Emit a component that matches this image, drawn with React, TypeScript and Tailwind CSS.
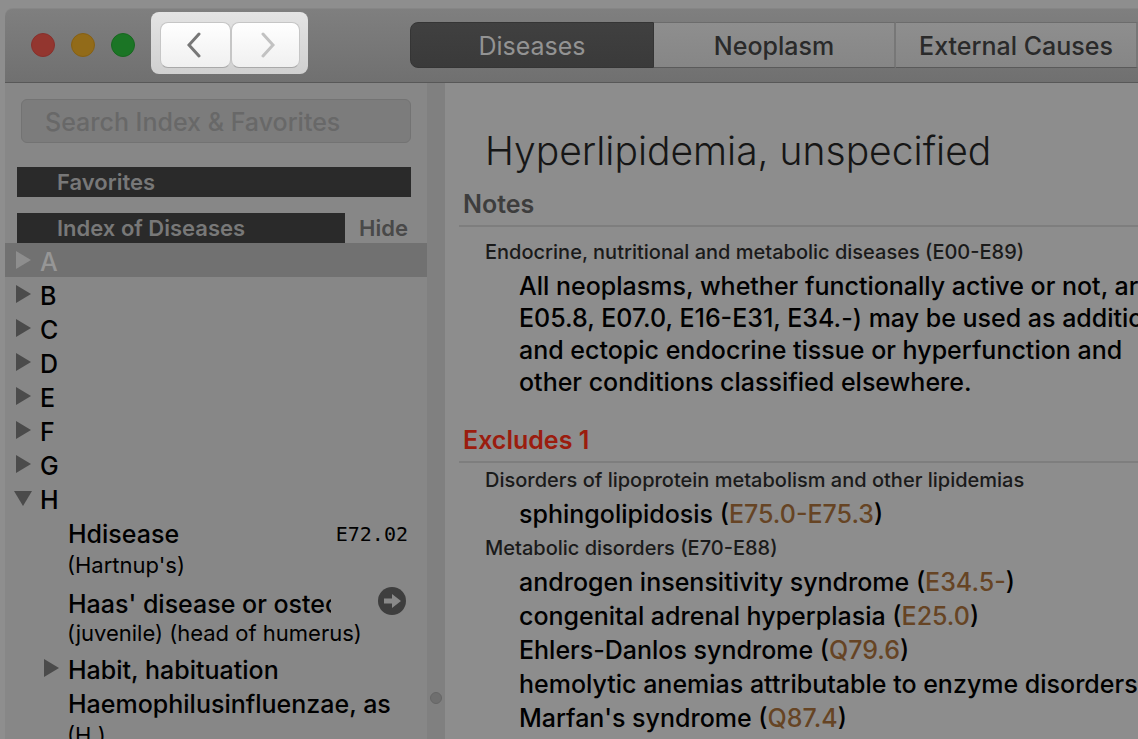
import { ReactNode } from 'react';

type Entry = {
  term: string;
  note?: string;
  code?: string;
  link?: boolean;
  expandable?: boolean;
};

const tabs = ['Diseases', 'Neoplasm', 'External Causes'];

const letters = ['A', 'B', 'C', 'D', 'E', 'F', 'G', 'H'];

const entries: Entry[] = [
  { term: 'Hdisease', note: "(Hartnup's)", code: 'E72.02' },
  { term: "Haas' disease or osteochondrosis", note: '(juvenile) (head of humerus)', link: true },
  { term: 'Habit, habituation', expandable: true },
  { term: 'Haemophilusinfluenzae, as', note: '(H.)' },
];

const metabolic = [
  { name: 'androgen insensitivity syndrome', code: 'E34.5-' },
  { name: 'congenital adrenal hyperplasia', code: 'E25.0' },
  { name: 'Ehlers-Danlos syndrome', code: 'Q79.6' },
  { name: 'hemolytic anemias attributable to enzyme disorders', code: 'D55.-' },
  { name: "Marfan's syndrome", code: 'Q87.4' },
];

const Triangle = ({ open = false }: { open?: boolean }) => (
  <svg width="18" height="18" viewBox="0 0 18 18" fill="currentColor" aria-hidden="true">
    {open ? <path d="M0 2H18L9 17Z" /> : <path d="M2 0V18L17 9Z" />}
  </svg>
);

const Toolbar = () => (
  <header className="flex h-[75px] shrink-0 items-start rounded-tl-lg border-t border-b border-t-[#868686] border-b-[#585858] bg-linear-to-b from-[#7f7f7f] to-[#707070]">
    <div className="flex shrink-0 gap-4 pt-6 pl-[26px]">
      <button aria-label="Close" className="size-6 rounded-full border border-[#87302c] bg-[#93362f]" />
      <button aria-label="Minimize" className="size-6 rounded-full border border-[#866014] bg-[#926b19]" />
      <button aria-label="Zoom" className="size-6 rounded-full border border-[#17671f] bg-[#1b7525]" />
    </div>

    {/* Back / forward */}
    <div className="mt-[3px] ml-4 flex h-[62px] w-[157px] shrink-0 rounded-lg bg-linear-to-b from-[#e4e4e4] to-[#d0d0d0] pt-[10px] pl-[9px]">
      <button aria-label="Back" className="flex h-[46px] w-[71px] items-center justify-center rounded-lg border border-[#c6c6c6] border-b-[#a9a9a9] bg-linear-to-b from-white to-[#f0f0f0] pr-1 text-[#777]">
        <svg width="14" height="26" viewBox="0 0 14 26" fill="none" stroke="currentColor" strokeWidth="3" strokeLinecap="round">
          <path d="M12 2L2 13L12 24" />
        </svg>
      </button>
      <button aria-label="Forward" className="flex h-[46px] w-[69px] items-center justify-center rounded-lg border border-[#c6c6c6] border-b-[#a9a9a9] bg-linear-to-b from-white to-[#f0f0f0] pl-1 text-[#c2c2c2]">
        <svg width="14" height="26" viewBox="0 0 14 26" fill="none" stroke="currentColor" strokeWidth="3" strokeLinecap="round">
          <path d="M2 2L12 13L2 24" />
        </svg>
      </button>
    </div>

    <nav className="mt-[13px] ml-[102px] flex h-[46px] shrink-0 text-[25px]">
      {tabs.map((tab, i) => (
        <button
          key={tab}
          className={
            i === 0
              ? 'w-[244px] rounded-l-lg border border-[#353535] bg-linear-to-b from-[#404040] to-[#3a3a3a] pt-1 text-[#939393]'
              : 'w-[242px] border-t border-r-2 border-b border-t-[#6c6c6c] border-r-[#777] border-b-[#5a5a5a] bg-linear-to-b from-[#8e8e8e] to-[#868686] pt-1 font-medium text-[#2a2a2a]'
          }
        >
          {tab}
        </button>
      ))}
    </nav>
  </header>
);

const Sidebar = () => (
  <aside className="w-[422px] shrink-0 overflow-hidden bg-[#878787]">
    <div className="px-4 pt-4">
      <input
        type="search"
        aria-label="Search Index & Favorites"
        placeholder="Search Index & Favorites"
        className="block h-11 w-[390px] rounded-md border border-[#737373] bg-[#7c7c7c] px-[23px] pt-[2px] text-[25px] font-medium placeholder:text-[#686868]"
      />
    </div>

    <h2 className="mx-3 mt-6 w-[394px] bg-[#2a2a2a] pl-10 text-[22px] leading-[30px] font-semibold text-[#787878]">
      Favorites
    </h2>
    <div className="mt-4 mr-4 ml-3 flex text-[22px] leading-[30px] font-semibold">
      <h2 className="w-[328px] bg-[#2a2a2a] pl-10 text-[#787878]">Index of Diseases</h2>
      <button className="pl-[14px] text-[#494949]">Hide</button>
    </div>

    <ul className="text-[25px] leading-[34px] font-medium text-black">
      {letters.map((letter) => (
        <li key={letter}>
          <button
            className={`flex h-[34px] w-full items-center pl-[9px] ${
              letter === 'A' ? 'bg-[#717171] text-[#969696]' : ''
            }`}
          >
            <span className={letter === 'A' ? 'text-[#8e8e8e]' : 'text-[#4b4b4b]'}>
              <Triangle open={letter === 'H'} />
            </span>
            <span className="pt-1 pl-2">{letter}</span>
          </button>
        </li>
      ))}

      {entries.map((entry) => (
        <li key={entry.term} className={entry.note ? 'h-[68px]' : 'h-[34px]'}>
          <div className="flex h-[34px] items-center pr-[19px] pl-[37px] whitespace-nowrap">
            <span className="w-[26px] shrink-0 text-[#4b4b4b]">{entry.expandable && <Triangle />}</span>
            <span className={entry.link ? 'w-[263px] overflow-hidden pt-2' : 'pt-1'}>{entry.term}</span>
            {entry.code && (
              <span className="ml-auto pt-1 font-['DejaVu_Sans_Mono',monospace] text-[20px] font-normal">
                {entry.code}
              </span>
            )}
            {entry.link && (
              <button aria-label="Go to entry" className="mr-[2px] ml-auto pt-[2px]">
                <svg width="28" height="28" viewBox="0 0 28 28">
                  <circle cx="14" cy="14" r="14" fill="#3e3e3e" />
                  <path d="M6 11.5H14V7L23 14L14 21V16.5H6Z" fill="#898989" />
                </svg>
              </button>
            )}
          </div>
          {entry.note && <div className="pt-[2px] pl-[62px] text-[22px] leading-7 font-normal">{entry.note}</div>}
        </li>
      ))}
    </ul>
  </aside>
);

const Section = ({ title, red = false, children }: { title: string; red?: boolean; children: ReactNode }) => (
  <section className="whitespace-nowrap">
    <h2
      className={`border-b-2 border-[#7e7e7e] pl-1 text-[25px] leading-[42px] font-semibold ${
        red ? 'text-[#9b1c0e]' : 'text-[#3d3d3d]'
      }`}
    >
      {title}
    </h2>
    {children}
  </section>
);

const Category = ({ children }: { children: ReactNode }) => (
  <h3 className="pl-[26px] text-[20px] leading-[34px] font-medium text-[#1a1a1a]">{children}</h3>
);

const Code = ({ name, code }: { name: string; code: string }) => (
  <li>
    {name} (
    <a href="#" className="text-[#664424]">
      {code}
    </a>
    )
  </li>
);

const Detail = () => (
  <main className="min-w-0 flex-1 overflow-hidden bg-[#8d8d8d] pl-[14px]">
    <h1 className="pt-11 pb-2 pl-[26px] text-[39px] leading-[48px] font-light whitespace-nowrap text-[#161616]">
      Hyperlipidemia, unspecified
    </h1>

    <Section title="Notes">
      <div className="pt-2">
        <Category>Endocrine, nutritional and metabolic diseases (E00-E89)</Category>
      </div>
      <p className="mb-[21px] pt-px pl-[60px] text-[25px] leading-8 font-medium text-black">
        All neoplasms, whether functionally active or not, are
        <br />
        E05.8, E07.0, E16-E31, E34.-) may be used as additional
        <br />
        and ectopic endocrine tissue or hyperfunction and
        <br />
        other conditions classified elsewhere.
      </p>
    </Section>

    <Section title="Excludes 1" red>
      <Category>Disorders of lipoprotein metabolism and other lipidemias</Category>
      <ul className="pl-[60px] text-[25px] leading-[34px] font-medium text-black">
        <Code name="sphingolipidosis" code="E75.0-E75.3" />
      </ul>
      <Category>Metabolic disorders (E70-E88)</Category>
      <ul className="pl-[60px] text-[25px] leading-[34px] font-medium text-black">
        {metabolic.map((item) => (
          <Code key={item.name} name={item.name} code={item.code} />
        ))}
      </ul>
    </Section>
  </main>
);

export default function App() {
  return (
    <div className="flex h-screen flex-col overflow-hidden bg-[#8e8e8e] pt-2 pl-[5px] font-['Inter','Liberation_Sans',sans-serif]">
      <Toolbar />
      <div className="flex min-h-0 flex-1">
        <Sidebar />
        {/* Splitter */}
        <div className="flex w-[18px] shrink-0 flex-col justify-end bg-[#808080] px-[3px] pb-[35px]">
          <div className="size-3 rounded-full border border-[#666] bg-[#6f6f6f]" />
        </div>
        <Detail />
      </div>
    </div>
  );
}
